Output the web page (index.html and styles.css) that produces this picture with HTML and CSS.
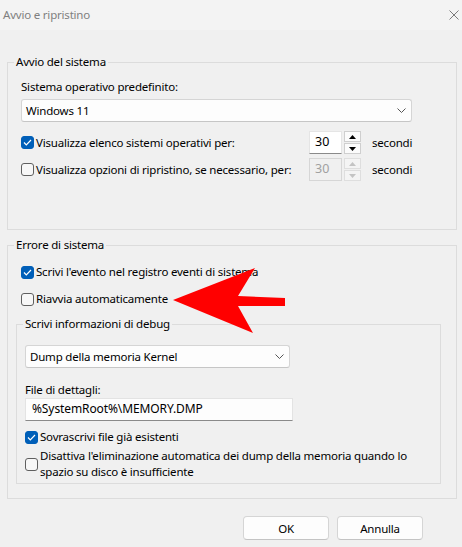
FILE: index.html
```html
<!DOCTYPE html>
<html lang="it">
<head>
<meta charset="utf-8">
<title>Avvio e ripristino</title>
<link rel="stylesheet" href="styles.css">
</head>
<body>
<div class="window">
  <div class="titlebar">
    <span class="title">Avvio e ripristino</span>
    <svg class="close" width="10" height="10" viewBox="0 0 10 10"><path d="M0.5 0.5L9.5 9.5M9.5 0.5L0.5 9.5" stroke="#7a7a7a" stroke-width="1" fill="none"/></svg>
  </div>
  <div class="content">
    <fieldset class="group g1">
      <legend class="lg1">Avvio del sistema</legend>
      <div class="label">Sistema operativo predefinito:</div>
      <div class="combo combo-os">
        <span>Windows 11</span>
        <svg class="chev" width="9" height="5" viewBox="0 0 9 5"><path d="M0.5 0.5L4.5 4.5L8.5 0.5" stroke="#555" stroke-width="1" fill="none"/></svg>
      </div>
      <div class="spin-row first">
        <div class="check"><span class="box checked"><svg width="9" height="7" viewBox="0 0 9 7"><path d="M1 3.5L3.3 5.8L8 1" stroke="#fff" stroke-width="1.2" fill="none"/></svg></span><span class="text">Visualizza elenco sistemi operativi per:</span></div>
        <div class="spinner">
          <div class="spin-input active">30</div>
          <div class="spin-btns">
            <span class="sbtn"><svg width="7" height="4" viewBox="0 0 7 4"><path d="M0 4L3.5 0L7 4Z" fill="#000"/></svg></span>
            <span class="sbtn"><svg width="7" height="4" viewBox="0 0 7 4"><path d="M0 0L3.5 4L7 0Z" fill="#000"/></svg></span>
          </div>
        </div>
        <span class="unit">secondi</span>
      </div>
      <div class="spin-row">
        <div class="check"><span class="box"></span><span class="text">Visualizza opzioni di ripristino, se necessario, per:</span></div>
        <div class="spinner disabled">
          <div class="spin-input">30</div>
          <div class="spin-btns">
            <span class="sbtn"><svg width="7" height="4" viewBox="0 0 7 4"><path d="M0 4L3.5 0L7 4Z" fill="#c4c4c4"/></svg></span>
            <span class="sbtn"><svg width="7" height="4" viewBox="0 0 7 4"><path d="M0 0L3.5 4L7 0Z" fill="#c4c4c4"/></svg></span>
          </div>
        </div>
        <span class="unit">secondi</span>
      </div>
    </fieldset>

    <fieldset class="group g2">
      <legend class="lg2">Errore di sistema</legend>
      <div class="check row-a"><span class="box checked"><svg width="9" height="7" viewBox="0 0 9 7"><path d="M1 3.5L3.3 5.8L8 1" stroke="#fff" stroke-width="1.2" fill="none"/></svg></span><span class="text">Scrivi l'evento nel registro eventi di sistema</span></div>
      <div class="check row-b"><span class="box"></span><span class="text">Riavvia automaticamente</span></div>

      <fieldset class="group g3">
        <legend class="lg3">Scrivi informazioni di debug</legend>
        <div class="combo combo-dump">
          <span>Dump della memoria Kernel</span>
          <svg class="chev" width="9" height="5" viewBox="0 0 9 5"><path d="M0.5 0.5L4.5 4.5L8.5 0.5" stroke="#555" stroke-width="1" fill="none"/></svg>
        </div>
        <div class="label file-label">File di dettagli:</div>
        <div class="textfield">%SystemRoot%\MEMORY.DMP</div>
        <div class="check row-c"><span class="box checked"><svg width="9" height="7" viewBox="0 0 9 7"><path d="M1 3.5L3.3 5.8L8 1" stroke="#fff" stroke-width="1.2" fill="none"/></svg></span><span class="text">Sovrascrivi file già esistenti</span></div>
        <div class="check row-d"><span class="box"></span><span class="text">Disattiva l'eliminazione automatica dei dump della memoria quando lo<br>spazio su disco è insufficiente</span></div>
      </fieldset>
    </fieldset>

    <div class="buttons">
      <button class="btn">OK</button>
      <button class="btn">Annulla</button>
    </div>
  </div>

  <svg class="arrow" width="462" height="547" viewBox="0 0 462 547">
    <polygon points="173,300 255,268 238,296 285,298 285,306 238,306 253,333" fill="#ff0000"/>
  </svg>
</div>
</body>
</html>
```

FILE: styles.css
```css
* { box-sizing: border-box; }

html, body {
  margin: 0;
  padding: 0;
}

body {
  width: 462px;
  height: 547px;
  background: #f0f0f0;
  font-family: "Noto Sans", "Open Sans", sans-serif;
  font-size: 11.5px;
  letter-spacing: -0.2px;
  line-height: 16px;
  color: #000;
  overflow: hidden;
}

.window {
  position: relative;
  width: 462px;
  height: 547px;
}

.titlebar {
  height: 30px;
  background: #f3f3f3;
  display: flex;
  align-items: center;
  justify-content: space-between;
  padding: 0 3px 0 3px;
}

.title {
  color: #7f7f7f;
}

.close {
  display: block;
  margin-top: -1px;
}

.content {
  padding: 0 5px 0 7px;
}

.group {
  margin: 0;
  border: 1px solid #dcdcdc;
  min-width: 0;
}

legend {
  padding: 0 2px;
  line-height: 16px;
}

.g1 {
  margin-top: 24px;
  padding: 9px 44px 48px 13px;
}

.lg1 { margin-left: -7px; }

.label { height: 16px; }

.combo {
  height: 23px;
  background: #fdfdfd;
  border: 1px solid #d5d5d5;
  border-bottom-color: #c6c6c6;
  border-radius: 3px;
  display: flex;
  align-items: center;
  justify-content: space-between;
  padding: 0 5px 0 4px;
}

.combo-os {
  margin-top: 4px;
}

.chev { display: block; }

.spin-row {
  display: grid;
  grid-template-columns: 288px 52px auto;
  column-gap: 0;
  align-items: center;
  height: 23px;
  margin-top: 4px;
}

.spin-row.first { margin-top: 9px; }

.check {
  display: flex;
  align-items: center;
  gap: 2px;
  white-space: nowrap;
}

.box {
  width: 13px;
  height: 13px;
  flex: 0 0 13px;
  border: 1px solid #5f5f5f;
  border-radius: 3px;
  background: #f7f7f7;
  display: flex;
  align-items: center;
  justify-content: center;
}

.box.checked {
  background: #005fb8;
  border-color: #005fb8;
}

.box svg { display: block; }

.spinner {
  display: flex;
  height: 23px;
  gap: 2px;
}

.spin-input {
  width: 33px;
  height: 23px;
  background: #fff;
  border: 1px solid #e5e5e5;
  padding: 2px 0 0 5px;
  font-size: 12.5px;
  letter-spacing: 0;
}

.spin-input.active {
  border-bottom: 1px solid #8a8a8a;
}

.spin-btns {
  width: 17px;
  display: flex;
  flex-direction: column;
  gap: 1px;
}

.sbtn {
  flex: 1;
  background: #fbfbfb;
  border: 1px solid #cfcfcf;
  display: flex;
  align-items: center;
  justify-content: center;
}

.disabled .spin-input {
  background: #f0f0f0;
  border-color: #d6d6d6;
  color: #a0a0a0;
}

.disabled .sbtn {
  background: #f4f4f4;
  border-color: #dedede;
}

.unit {
  white-space: nowrap;
  padding-left: 11px;
}

.g2 {
  margin-top: 7px;
  padding: 11px 15px 14px 8px;
}

.lg2 { margin-left: -2px; }

.row-a { margin-left: 5px; }

.row-b { margin-left: 5px; margin-top: 11px; }

.g3 {
  margin-top: 9px;
  padding: 13px 9px 3px 8px;
}

.lg3 { margin-left: -2px; }

.combo-dump { width: 265px; }

.file-label { margin-top: 14px; }

.textfield {
  width: 268px;
  height: 23px;
  background: #fdfdfd;
  border: 1px solid #e3e3e3;
  border-bottom: 1px solid #8a8a8a;
  padding: 2px 0 0 6px;
  font-size: 12px;
  letter-spacing: -0.1px;
}

.row-c { margin-top: 8px; }

.row-d { margin-top: 3px; }

.buttons {
  display: flex;
  justify-content: flex-end;
  gap: 8px;
  margin-top: 17px;
  margin-right: 34px;
}

.btn {
  width: 86px;
  height: 24px;
  background: #fdfdfd;
  border: 1px solid #d5d5d5;
  border-bottom-color: #c4c4c4;
  border-radius: 4px;
  font-family: inherit;
  font-size: 11.5px;
  letter-spacing: -0.2px;
  color: #000;
  padding: 0;
}

.arrow {
  position: absolute;
  left: 0;
  top: 0;
  pointer-events: none;
}
```
